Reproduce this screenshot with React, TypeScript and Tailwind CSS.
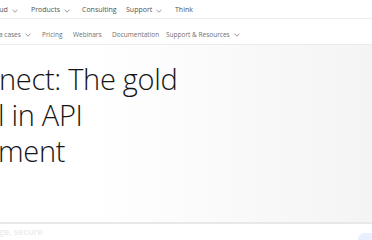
import { ReactNode } from "react";

function Chevron() {
  return (
    <svg width="6" height="4" viewBox="0 0 6 4" className="ml-[4px] shrink-0">
      <path d="M0.5 0.8 L3 3.2 L5.5 0.8" fill="none" stroke="#6f6f6f" strokeWidth="0.7" />
    </svg>
  );
}

function NavItem({ children, dropdown, className = "" }: { children: ReactNode; dropdown?: boolean; className?: string }) {
  return (
    <div className={`flex items-center whitespace-nowrap ${className}`}>
      <span>{children}</span>
      {dropdown && <Chevron />}
    </div>
  );
}

function App() {
  return (
    <div
      className="w-[372px] h-[240px] overflow-hidden bg-white"
      style={{ fontFamily: '"Open Sans", "Noto Sans", sans-serif' }}
    >
      {/* top nav */}
      <div className="h-[19px] pt-[3px] border-b border-[#ececec] flex items-center text-[7px] text-[#525252] -ml-[5px]">
        <NavItem dropdown className="w-[36px]">oud</NavItem>
        <NavItem dropdown className="w-[51px]">Products</NavItem>
        <NavItem className="w-[44px]">Consulting</NavItem>
        <NavItem dropdown className="w-[49px]">Support</NavItem>
        <NavItem>Think</NavItem>
      </div>

      {/* secondary nav */}
      <div className="h-[26px] pt-[6px] border-b border-[#ececec] flex items-center text-[6.5px] text-[#6f6f6f] -ml-[1px]">
        <NavItem dropdown className="w-[43px]">a cases</NavItem>
        <NavItem className="w-[31px]">Pricing</NavItem>
        <NavItem className="w-[39px]">Webinars</NavItem>
        <NavItem className="w-[54px]">Documentation</NavItem>
        <NavItem dropdown>Support &amp; Resources</NavItem>
      </div>

      {/* hero */}
      <div className="h-[179px] border-b-2 border-[#e8e8e8] bg-gradient-to-r from-white from-[25%] to-[#f4f4f4] pt-[16px]">
        <h1 className="text-[29px] leading-[36px] font-light text-[#161616] tracking-[-0.3px]">
          <div className="-ml-[1px]">nect: The gold</div>
          <div className="-ml-[2px]">l in API</div>
          <div className="-ml-[2px]">ment</div>
        </h1>
      </div>

      {/* below hero */}
      <div className="flex items-start justify-between pt-[1px]">
        <span className="text-[9px] font-semibold text-[#ececec] -ml-[1px]">ge, secure</span>
        <div className="mt-[8px] w-[14px] h-[12px] rounded-l-[6px] bg-[#e8f0ff]" />
      </div>
    </div>
  );
}

export default App;
